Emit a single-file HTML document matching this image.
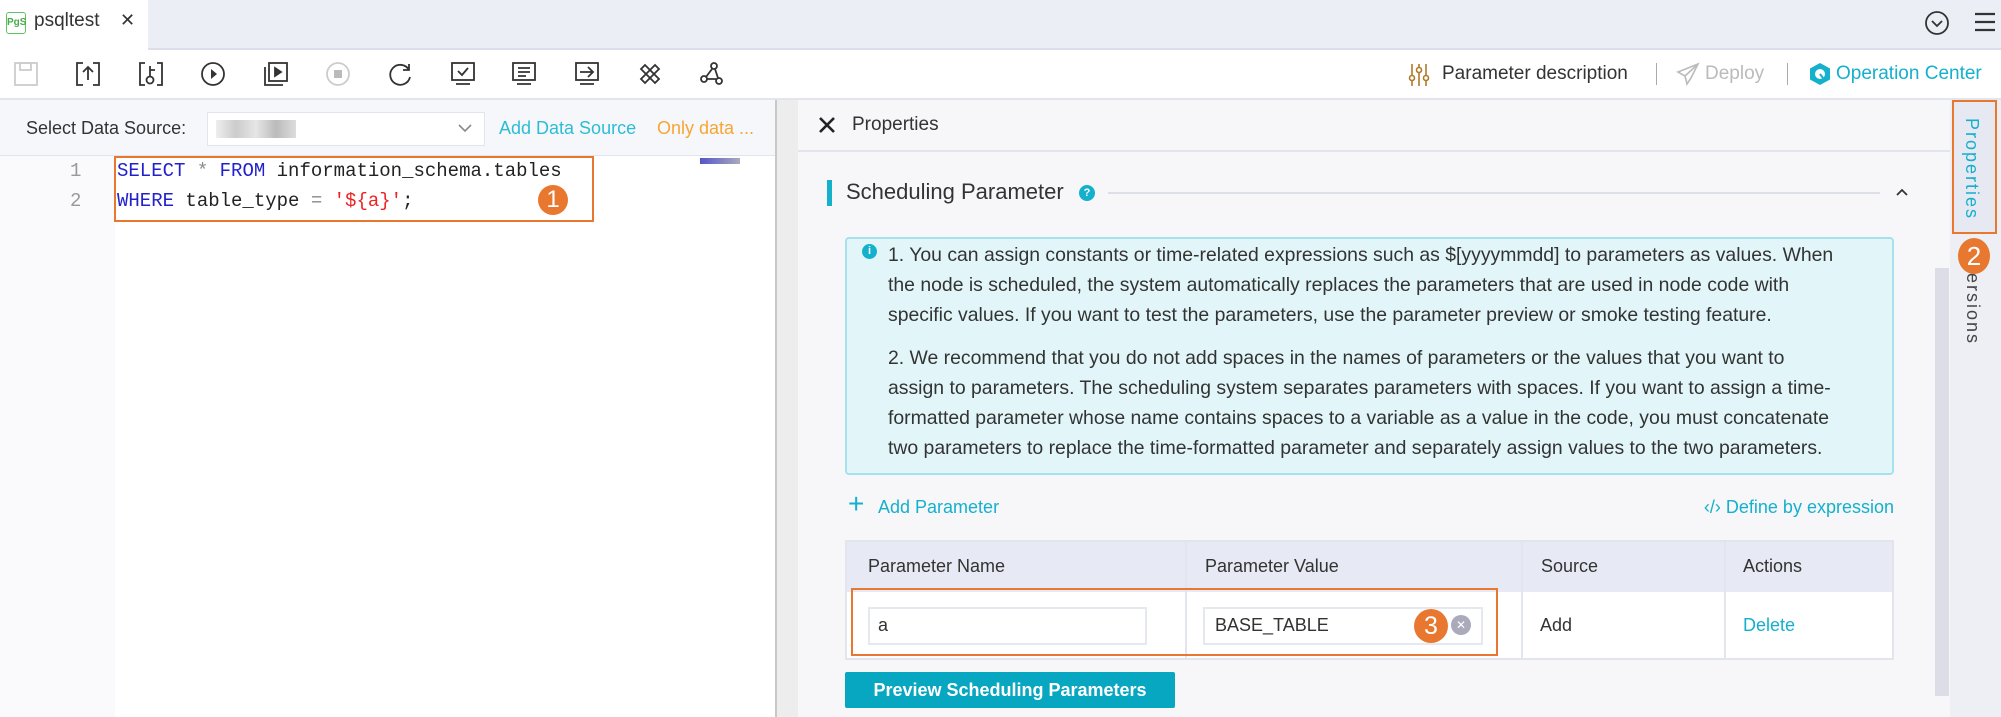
<!DOCTYPE html>
<html><head><meta charset="utf-8"><style>
*{box-sizing:border-box;margin:0;padding:0}
body{width:2001px;height:717px;overflow:hidden;font-family:"Liberation Sans",sans-serif;background:#fff;position:relative;color:#333}
.a{position:absolute}
.t{white-space:nowrap}
.mono{font-family:"Liberation Mono",monospace}
svg{position:absolute;overflow:visible}
</style></head><body>
<div class="a" style="left:0;top:0;width:2001px;height:50px;background:#eceef6;border-bottom:2px solid #dcdfea"></div>
<div class="a" style="left:0;top:0;width:148px;height:50px;background:#fff"></div>
<div class="a" style="left:6px;top:12px;width:20px;height:22px;border:1.5px solid #5cc560;border-radius:3px;font-size:10px;color:#4aa84d;text-align:center;line-height:19px;font-weight:bold">PgS</div>
<div class="a t" style="left:34px;top:10px;font-size:19px;color:#333">psqltest</div>
<div class="a t" style="left:120px;top:10px;font-size:18px;color:#333">✕</div>
<svg style="left:1924px;top:10px" width="26" height="26"><circle cx="13" cy="13" r="11" fill="none" stroke="#333" stroke-width="1.8"/><path d="M8 11 l5 5 l5 -5" fill="none" stroke="#333" stroke-width="1.8"/></svg>
<svg style="left:1974px;top:10px" width="22" height="24"><path d="M1 4h20M1 12h20M1 20h20" stroke="#333" stroke-width="2.2"/></svg>
<div class="a" style="left:0;top:50px;width:2001px;height:50px;background:#fff;border-bottom:2px solid #e2e4ee"></div>
<svg style="left:14px;top:62px" width="24" height="24" fill="none" stroke="#ccc" stroke-width="1.8"><rect x="1" y="1" width="22" height="22"/><rect x="6" y="1" width="11" height="7"/></svg>
<svg style="left:76px;top:62px" width="24" height="24" fill="none" stroke="#333" stroke-width="1.8"><path d="M7 1H1v22h6M17 1h6v22h-6M12 18V5M7 10l5-5 5 5"/></svg>
<svg style="left:139px;top:62px" width="24" height="24" fill="none" stroke="#333" stroke-width="1.8"><path d="M6 1H1v22h5M18 1h5v22h-5M11 4v11M11 8h5"/><circle cx="11" cy="18" r="3.5"/></svg>
<svg style="left:201px;top:62px" width="24" height="24"><circle cx="12" cy="12" r="11" fill="none" stroke="#333" stroke-width="1.8"/><path d="M10 7l6 5-6 5z" fill="#333"/></svg>
<svg style="left:264px;top:62px" width="24" height="24" fill="none" stroke="#333" stroke-width="1.8"><rect x="5" y="1" width="18" height="18"/><path d="M1 5v18h18"/><path d="M11 6l6 4-6 4z" fill="#333"/></svg>
<svg style="left:326px;top:62px" width="24" height="24"><circle cx="12" cy="12" r="11" fill="none" stroke="#ccc" stroke-width="1.8"/><rect x="8" y="8" width="8" height="8" fill="#bbb"/></svg>
<svg style="left:389px;top:62px" width="24" height="24" fill="none" stroke="#333" stroke-width="1.8"><path d="M20 8A10 10 0 1 0 21 15M20 2v6h-6"/></svg>
<svg style="left:451px;top:62px" width="24" height="24" fill="none" stroke="#333" stroke-width="1.8"><rect x="1" y="1" width="22" height="17"/><path d="M5 22h14M7 9l4 4 6-7"/></svg>
<svg style="left:512px;top:62px" width="24" height="24" fill="none" stroke="#333" stroke-width="1.8"><rect x="1" y="1" width="22" height="17"/><path d="M5 22h14M6 6h12M6 10h12M6 14h8"/></svg>
<svg style="left:575px;top:62px" width="24" height="24" fill="none" stroke="#333" stroke-width="1.8"><rect x="1" y="1" width="22" height="17"/><path d="M5 22h14M5 10h13M13 5l5 5-5 5"/></svg>
<svg style="left:638px;top:62px" width="24" height="24" fill="none" stroke="#333" stroke-width="1.8"><path d="M3 7l4-4 14 14-4 4zM21 7l-4-4L3 17l4 4z"/></svg>
<svg style="left:700px;top:62px" width="24" height="24" fill="none" stroke="#333" stroke-width="1.8"><circle cx="14" cy="4" r="3"/><circle cx="4" cy="17" r="3"/><circle cx="19" cy="19" r="3"/><path d="M12 7l-6 8M15 7l3 9M7 17h9"/></svg>
<svg style="left:1408px;top:63px" width="22" height="24" fill="none" stroke="#b07a2a" stroke-width="1.6"><path d="M4 1v22M11 1v22M18 1v22"/><circle cx="4" cy="15" r="2.5" fill="#fff"/><circle cx="11" cy="7" r="2.5" fill="#fff"/><circle cx="18" cy="15" r="2.5" fill="#fff"/></svg>
<div class="a t" style="left:1442px;top:63px;font-size:19px;color:#333">Parameter description</div>
<div class="a" style="left:1656px;top:63px;width:1px;height:22px;background:#aaa"></div>
<svg style="left:1677px;top:63px" width="22" height="22" fill="none" stroke="#bbb" stroke-width="1.6"><path d="M21 1L1 9l7 4 2 8 4-6zM8 13L21 1"/></svg>
<div class="a t" style="left:1705px;top:63px;font-size:19px;color:#bbb">Deploy</div>
<div class="a" style="left:1787px;top:63px;width:1px;height:22px;background:#aaa"></div>
<svg style="left:1808px;top:62px" width="24" height="24"><path d="M12 1l10 5.5v11L12 23 2 17.5v-11z" fill="#14b0cc"/><circle cx="12" cy="12" r="5" fill="#fff"/><path d="M12 12l3 4" stroke="#14b0cc" stroke-width="2"/></svg>
<div class="a t" style="left:1836px;top:63px;font-size:19px;color:#14b0cc">Operation Center</div>
<div class="a" style="left:0;top:100px;width:775px;height:56px;background:#f6f7fb;border-bottom:1px solid #e3e5ee"></div>
<div class="a t" style="left:26px;top:118px;font-size:18px;color:#333">Select Data Source:</div>
<div class="a" style="left:207px;top:112px;width:278px;height:34px;background:#fff;border:1px solid #e3e5ee"></div>
<div class="a" style="left:216px;top:120px;width:80px;height:18px;background:linear-gradient(90deg,#eee,#ccc,#e6e6e6,#bbb,#ddd)"></div>
<svg style="left:458px;top:124px" width="14" height="9"><path d="M1 1l6 6 6-6" fill="none" stroke="#888" stroke-width="1.6"/></svg>
<div class="a t" style="left:499px;top:118px;font-size:18px;color:#2cbdd6">Add Data Source</div>
<div class="a t" style="left:657px;top:118px;font-size:18px;color:#f7a632">Only data ...</div>
<div class="a" style="left:0;top:156px;width:775px;height:561px;background:#fff"></div>
<div class="a" style="left:0;top:156px;width:115px;height:561px;background:#fafafc"></div>
<div class="a" style="left:700px;top:158px;width:40px;height:6px;background:linear-gradient(90deg,#55c,#aab)"></div>
<div class="a" style="left:775px;top:100px;width:23px;height:617px;background:#ededed;border-left:2px solid #c8c8c8"></div>
<div class="a t mono" style="left:70px;top:160px;font-size:19px;color:#999">1</div>
<div class="a t mono" style="left:70px;top:190px;font-size:19px;color:#999">2</div>
<div class="a t mono" style="left:117px;top:160px;font-size:19px;color:#222"><span style="color:#22c">SELECT</span> <span style="color:#888">*</span> <span style="color:#22c">FROM</span> information_schema.tables</div>
<div class="a t mono" style="left:117px;top:190px;font-size:19px;color:#222"><span style="color:#22c">WHERE</span> table_type <span style="color:#888">=</span> <span style="color:#e22">'${a}'</span>;</div>
<div class="a" style="left:114px;top:156px;width:480px;height:66px;border:2px solid #e8782f"></div>
<div class="a" style="left:538px;top:185px;width:30px;height:30px;border-radius:50%;background:#e8782f;color:#fff;font-size:24px;text-align:center;line-height:30px">1</div>
<div class="a" style="left:798px;top:100px;width:1152px;height:617px;background:#f7f7fa"></div>
<div class="a" style="left:798px;top:150px;width:1152px;height:2px;background:#e2e4ee"></div>
<svg style="left:818px;top:116px" width="18" height="18"><path d="M2 2l14 14M16 2L2 16" stroke="#222" stroke-width="2.6"/></svg>
<div class="a t" style="left:852px;top:114px;font-size:19px;color:#333">Properties</div>
<div class="a" style="left:827px;top:180px;width:5px;height:26px;background:#14b0cc"></div>
<div class="a t" style="left:846px;top:179px;font-size:22px;color:#333">Scheduling Parameter</div>
<div class="a" style="left:1079px;top:185px;width:16px;height:16px;border-radius:50%;background:#14b0cc;color:#fff;font-size:11px;text-align:center;line-height:16px;font-weight:bold">?</div>
<div class="a" style="left:1108px;top:192px;width:772px;height:2px;background:#dcdfe8"></div>
<svg style="left:1896px;top:188px" width="12" height="8"><path d="M1 7l5-5 5 5" fill="none" stroke="#333" stroke-width="1.8"/></svg>
<div class="a" style="left:845px;top:237px;width:1049px;height:238px;background:#e2f6f9;border:2px solid #a6e2ed;border-radius:4px"></div>
<div class="a" style="left:862px;top:244px;width:15px;height:15px;border-radius:50%;background:#14b0cc;color:#fff;font-size:11px;text-align:center;line-height:15px;font-weight:bold">i</div>
<div class="a t" style="left:888px;top:240px;font-size:19.4px;line-height:30px;color:#333">
<div>1. You can assign constants or time-related expressions such as $[yyyymmdd] to parameters as values. When</div>
<div>the node is scheduled, the system automatically replaces the parameters that are used in node code with</div>
<div>specific values. If you want to test the parameters, use the parameter preview or smoke testing feature.</div>
<div style="margin-top:13px">2. We recommend that you do not add spaces in the names of parameters or the values that you want to</div>
<div>assign to parameters. The scheduling system separates parameters with spaces. If you want to assign a time-</div>
<div>formatted parameter whose name contains spaces to a variable as a value in the code, you must concatenate</div>
<div>two parameters to replace the time-formatted parameter and separately assign values to the two parameters.</div>
</div>
<div class="a t" style="left:848px;top:490px;font-size:28px;color:#14b0cc;line-height:28px">+</div>
<div class="a t" style="left:878px;top:497px;font-size:18px;color:#14b0cc">Add Parameter</div>
<div class="a t" style="left:1680px;top:497px;width:214px;text-align:right;font-size:18px;color:#14b0cc">‹/› Define by expression</div>
<div class="a" style="left:845px;top:540px;width:1049px;height:120px;border:2px solid #e2e4ee;background:#fff"></div>
<div class="a" style="left:847px;top:542px;width:1045px;height:50px;background:#e7e9f4"></div>
<div class="a" style="left:1185px;top:542px;width:2px;height:116px;background:#e2e4ee"></div>
<div class="a" style="left:1521px;top:542px;width:2px;height:116px;background:#e2e4ee"></div>
<div class="a" style="left:1724px;top:542px;width:2px;height:116px;background:#e2e4ee"></div>
<div class="a t" style="left:868px;top:556px;font-size:18px;color:#333">Parameter Name</div>
<div class="a t" style="left:1205px;top:556px;font-size:18px;color:#333">Parameter Value</div>
<div class="a t" style="left:1541px;top:556px;font-size:18px;color:#333">Source</div>
<div class="a t" style="left:1743px;top:556px;font-size:18px;color:#333">Actions</div>
<div class="a" style="left:868px;top:607px;width:279px;height:38px;border:2px solid #e6e8ef;background:#fff"></div>
<div class="a t" style="left:878px;top:615px;font-size:18px">a</div>
<div class="a" style="left:1203px;top:607px;width:280px;height:38px;border:2px solid #e6e8ef;background:#fff"></div>
<div class="a t" style="left:1215px;top:615px;font-size:18px">BASE_TABLE</div>
<div class="a" style="left:1451px;top:615px;width:20px;height:20px;border-radius:50%;background:#aab;color:#fff;font-size:12px;text-align:center;line-height:20px">✕</div>
<div class="a" style="left:1414px;top:609px;width:34px;height:34px;border-radius:50%;background:#e8782f;color:#fff;font-size:25px;text-align:center;line-height:34px">3</div>
<div class="a t" style="left:1540px;top:615px;font-size:18px">Add</div>
<div class="a t" style="left:1743px;top:615px;font-size:18px;color:#14b0cc">Delete</div>
<div class="a" style="left:851px;top:588px;width:647px;height:68px;border:2px solid #e8782f"></div>
<div class="a" style="left:845px;top:672px;width:330px;height:36px;background:#07a6c1;border-radius:2px;color:#fff;font-size:18px;font-weight:bold;text-align:center;line-height:36px">Preview Scheduling Parameters</div>
<div class="a" style="left:1935px;top:268px;width:14px;height:428px;background:#dcdde6"></div>
<div class="a" style="left:1950px;top:100px;width:51px;height:617px;background:#eeeff4"></div>
<div class="a" style="left:1952px;top:100px;width:45px;height:134px;background:#e6e8f2;border:2px solid #e8782f"></div>
<div class="a t" style="left:1961px;top:118px;font-size:18px;color:#14b0cc;writing-mode:vertical-rl;letter-spacing:2px">Properties</div>
<div class="a t" style="left:1962px;top:260px;font-size:18px;color:#444;writing-mode:vertical-rl;letter-spacing:2px">Versions</div>
<div class="a" style="left:1958px;top:238px;width:32px;height:36px;border-radius:50%;background:#e8782f;color:#fff;font-size:26px;text-align:center;line-height:36px">2</div>
</body></html>
